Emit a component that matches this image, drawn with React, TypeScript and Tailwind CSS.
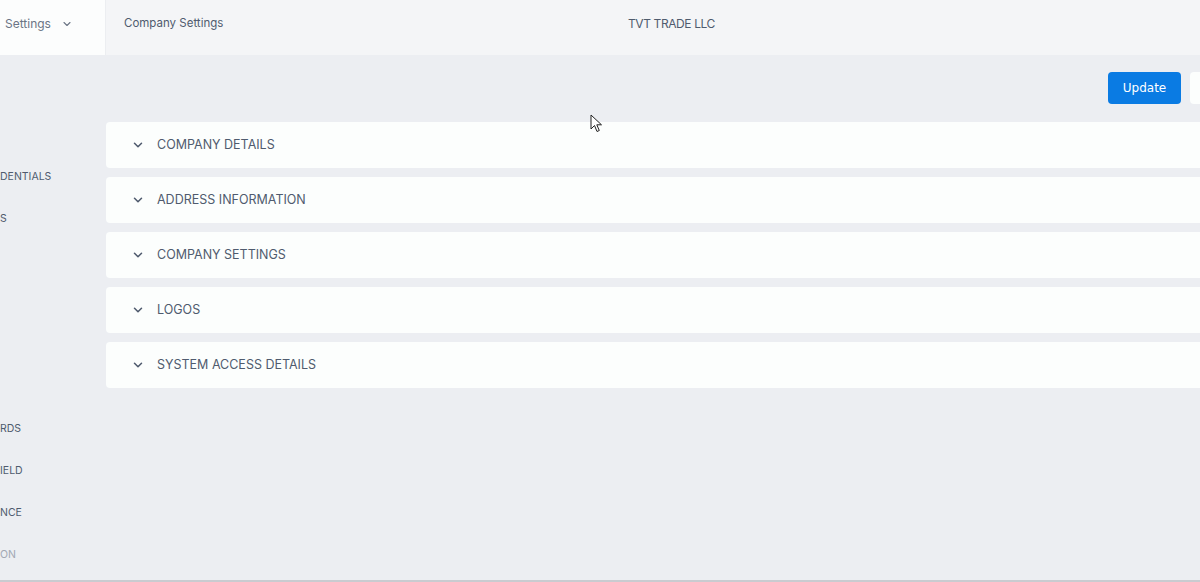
import { ChevronDown } from "lucide-react";

const sections = [
  "COMPANY DETAILS",
  "ADDRESS INFORMATION",
  "COMPANY SETTINGS",
  "LOGOS",
  "SYSTEM ACCESS DETAILS",
];

// sidebar labels are cut off by the left edge of the window
const sideItems = [
  { label: "DENTIALS", muted: false },
  { label: "S", muted: false },
  { label: "", muted: false },
  { label: "", muted: false },
  { label: "", muted: false },
  { label: "", muted: false },
  { label: "RDS", muted: false },
  { label: "IELD", muted: false },
  { label: "NCE", muted: false },
  { label: "ON", muted: true },
];

export default function App() {
  return (
    <div
      className="relative w-[1200px] h-[582px] overflow-hidden bg-[#eceef2] flex flex-col"
      style={{ fontFamily: "Inter, 'Noto Sans', sans-serif" }}
    >
      {/* top bar */}
      <header className="h-[55px] shrink-0 flex bg-[#f4f5f7]">
        <div className="w-[106px] shrink-0 bg-[#fcfdfd] border-r border-[#eceef1] flex items-center pb-[8px] pl-[5px] gap-[10px]">
          <span className="text-[12px] text-[#6b7585]">Settings</span>
          <ChevronDown className="w-[12px] h-[12px] text-[#6b7585]" strokeWidth={2.2} />
        </div>
        <div className="flex-1 flex items-center pb-[8px] pl-[18px]">
          <span className="text-[11.5px] text-[#4f5b6e] w-[504px]">Company Settings</span>
          <span className="text-[12px] text-[#4f5b6e] tracking-[-0.4px]">TVT TRADE LLC</span>
        </div>
      </header>

      <div className="flex-1 flex border-b-2 border-[#c9cbd0]">
        {/* sidebar */}
        <aside className="w-[106px] shrink-0 pt-[101px] flex flex-col">
          {sideItems.map((item, i) => (
            <div key={i} className="h-[42px] flex items-center">
              <span
                className={
                  "text-[10.5px] " + (item.muted ? "text-[#a2a8b2]" : "text-[#4f5b6e]")
                }
              >
                {item.label}
              </span>
            </div>
          ))}
        </aside>

        {/* main */}
        <main className="w-[1180px] shrink-0 flex flex-col">
          <div className="h-[67px] flex items-end justify-end gap-[9px] pb-[18px] pr-[19px]">
            <button
              className="h-[32px] w-[73px] rounded-[4px] bg-[#0a7be3] text-white text-[12px]"
              style={{ fontFamily: "'DejaVu Sans', sans-serif" }}
            >
              Update
            </button>
            <button className="h-[32px] w-[77px] rounded-[4px] bg-[#fcfefd]" />
          </div>
          <div className="flex flex-col gap-[9px]">
            {sections.map((s) => (
              <div
                key={s}
                className="h-[46px] rounded-[4px] bg-[#fcfefd] flex items-center pl-[25px] gap-[12px]"
              >
                <ChevronDown className="w-[14px] h-[14px] text-[#4f5b6e]" strokeWidth={2.6} />
                <span className="text-[12.5px] text-[#4f5b6e]">{s}</span>
              </div>
            ))}
          </div>
        </main>
      </div>

      {/* mouse cursor */}
      <svg
        className="absolute left-[590px] top-[114px]"
        width="14"
        height="20"
        viewBox="0 0 14 20"
      >
        <path
          d="M1 1 L1 15 L4.5 11.5 L7 17.5 L9.3 16.5 L6.8 10.8 L11.5 10.8 Z"
          fill="#ffffff"
          stroke="#222"
          strokeWidth="1"
          strokeLinejoin="round"
        />
      </svg>
    </div>
  );
}
